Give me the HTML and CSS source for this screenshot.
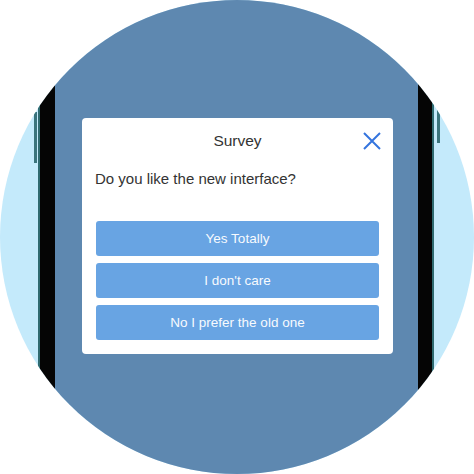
FILE: index.html
```html
<!DOCTYPE html>
<html lang="en">
<head>
<meta charset="utf-8">
<title>Survey</title>
<link rel="stylesheet" href="styles.css">
</head>
<body>
<div class="badge">
  <div class="phone">
    <div class="edge edge-left"><span class="key key-left"></span></div>
    <div class="bezel bezel-left"></div>
    <div class="screen">
      <div class="modal">
        <div class="modal-head">
          <span></span>
          <h1 class="modal-title">Survey</h1>
          <button class="close" aria-label="Close">
            <svg width="18" height="18" viewBox="0 0 18 18"><path d="M1 1 L17 17 M17 1 L1 17" stroke="#3474de" stroke-width="2" fill="none" stroke-linecap="butt"/></svg>
          </button>
        </div>
        <p class="question">Do you like the new interface?</p>
        <div class="options">
          <button class="option">Yes Totally</button>
          <button class="option">I don't care</button>
          <button class="option">No I prefer the old one</button>
        </div>
      </div>
    </div>
    <div class="bezel bezel-right"></div>
    <div class="edge edge-right"><span class="key key-right"></span></div>
  </div>
</div>
</body>
</html>
```
FILE: styles.css
```css
html, body {
  margin: 0;
  padding: 0;
  background: #ffffff;
}
body {
  width: 474px;
  height: 474px;
  font-family: "Liberation Sans", Arial, sans-serif;
}
.badge {
  width: 474px;
  height: 474px;
  border-radius: 50%;
  overflow: hidden;
  background: #c4eafb;
  display: flex;
}
.phone {
  margin-left: 34px;
  height: 474px;
  display: flex;
}
.edge {
  display: flex;
  flex-direction: column;
}
.edge-left {
  width: 4px;
  border-right: 2px solid #2f6a70;
}
.key {
  display: block;
  width: 3px;
  background: #3b747c;
}
.key-left {
  margin-top: 112px;
  height: 51px;
}
.edge-right {
  width: 6px;
  border-left: 2px solid #2f6a70;
}
.key-right {
  margin-top: 110px;
  margin-left: 3px;
  height: 33px;
}
.bezel {
  background: #050505;
}
.bezel-left {
  width: 15px;
}
.bezel-right {
  width: 14px;
}
.screen {
  width: 363px;
  background: #5e88b0;
  display: flex;
  align-items: flex-start;
  padding: 118px 0 0 27px;
  box-sizing: border-box;
}
.modal {
  width: 311px;
  box-sizing: border-box;
  background: #ffffff;
  border-radius: 4px;
  padding: 12px 14px 14px;
}
.modal-head {
  display: grid;
  grid-template-columns: 1fr auto 1fr;
  align-items: center;
  height: 22px;
}
.modal-title {
  margin: 0;
  font-size: 15.5px;
  font-weight: normal;
  line-height: 22px;
  color: #333333;
}
.close {
  justify-self: end;
  margin-right: -2px;
  padding: 0;
  border: 0;
  background: none;
  width: 18px;
  height: 18px;
  display: flex;
}
.question {
  margin: 17px 0 32px -1px;
  font-size: 15px;
  line-height: 20px;
  color: #333333;
}
.options {
  display: flex;
  flex-direction: column;
  gap: 7px;
}
.option {
  height: 35px;
  border: 0;
  border-radius: 3px;
  background: #68a4e3;
  color: #f7fafe;
  font-family: "Liberation Sans", Arial, sans-serif;
  font-size: 13.5px;
  padding: 0;
}
```
